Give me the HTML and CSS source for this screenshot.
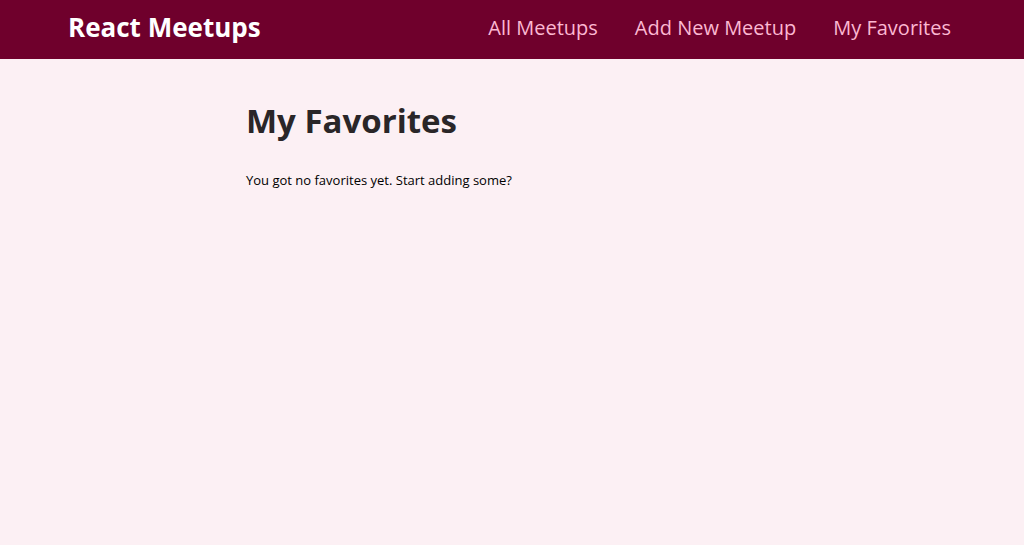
FILE: index.html
```html
<!DOCTYPE html>
<html lang="en">
<head>
<meta charset="utf-8">
<title>React Meetups</title>
<link rel="stylesheet" href="styles.css">
</head>
<body>
<header class="header">
  <div class="logo">React Meetups</div>
  <nav>
    <ul class="nav-list">
      <li><a href="#">All Meetups</a></li>
      <li><a href="#">Add New Meetup</a></li>
      <li><a href="#">My Favorites</a></li>
    </ul>
  </nav>
</header>
<main class="main">
  <section>
    <h1 class="title">My Favorites</h1>
    <p class="text">You got no favorites yet. Start adding some?</p>
  </section>
</main>
</body>
</html>
```

FILE: styles.css
```css
* { box-sizing: border-box; }
html, body { margin: 0; padding: 0; }
body {
  font-family: "Open Sans", "Noto Sans", sans-serif;
  background: #fcf0f4;
  color: #000;
}
.header {
  height: 59px;
  background: #6f002c;
  display: flex;
  align-items: center;
  justify-content: space-between;
  padding: 0 73px 5px 68px;
}
.logo {
  color: #fff;
  font-weight: 700;
  font-size: 26px;
  line-height: 1;
}
.nav-list {
  list-style: none;
  margin: 0;
  padding: 0;
  display: flex;
  align-items: baseline;
  gap: 37px;
}
.nav-list a {
  text-decoration: none;
  color: #fcb8d2;
  font-size: 20px;
}
.main {
  max-width: 532px;
  margin: 0 auto;
  padding-top: 39px;
}
.title {
  margin: 0;
  font-size: 33px;
  font-weight: 700;
  color: #2a2628;
  line-height: 1.4;
}
.text {
  margin: 27px 0 0 0;
  font-size: 13px;
}
```
